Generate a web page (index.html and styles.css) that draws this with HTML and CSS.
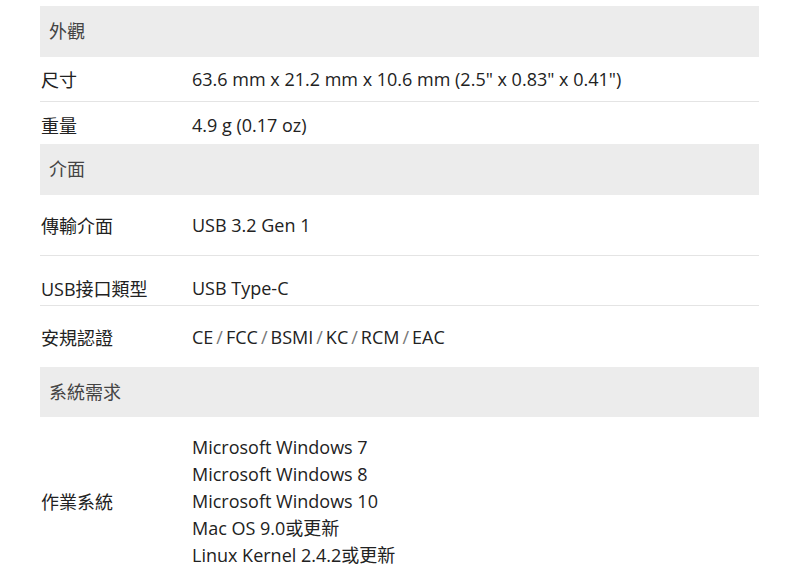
FILE: index.html
```html
<!DOCTYPE html>
<html lang="zh-Hant">
<head>
<meta charset="utf-8">
<link rel="stylesheet" href="styles.css">
</head>
<body>
<div class="spec">
  <div class="head h1">外觀</div>
  <div class="row r-size"><div class="label">尺寸</div><div class="value">63.6 mm x 21.2 mm x 10.6 mm (2.5" x 0.83" x 0.41")</div></div>
  <div class="row r-weight nob"><div class="label">重量</div><div class="value">4.9 g (0.17 oz)</div></div>
  <div class="head h2">介面</div>
  <div class="row r-tall"><div class="label">傳輸介面</div><div class="value">USB 3.2 Gen 1</div></div>
  <div class="row r-mid"><div class="label">USB接口類型</div><div class="value">USB Type-C</div></div>
  <div class="row r-tall nob"><div class="label">安規認證</div><div class="value">CE<span class="sl">/</span>FCC<span class="sl">/</span>BSMI<span class="sl">/</span>KC<span class="sl">/</span>RCM<span class="sl">/</span>EAC</div></div>
  <div class="head h3">系統需求</div>
  <div class="row r-os nob"><div class="label">作業系統</div><div class="value list">
    <div>Microsoft Windows 7</div>
    <div>Microsoft Windows 8</div>
    <div>Microsoft Windows 10</div>
    <div>Mac OS 9.0或更新</div>
    <div>Linux Kernel 2.4.2或更新</div>
  </div></div>
</div>
</body>
</html>
```
FILE: styles.css
```css
html, body {
  margin: 0;
  padding: 0;
  background: #fff;
}
body {
  font-family: "Open Sans", "Noto Sans CJK TC", sans-serif;
  font-size: 18px;
  color: #222;
}
.spec {
  margin: 6px 0 0 40px;
  width: 719px;
}
.head {
  background: #ececec;
  height: 51px;
  display: flex;
  align-items: center;
  padding: 0 0 3px 9px;
  box-sizing: border-box;
  color: #444;
}
.h3 { height: 50px; }
.row {
  display: flex;
  align-items: center;
  border-bottom: 1px solid #e4e4e4;
  box-sizing: border-box;
}
.row.nob { border-bottom: none; }
.label {
  width: 151px;
  padding-left: 1px;
  flex: none;
}
.value { flex: 1; }
.sl {
  color: #777;
  margin: 0 3px;
}
.r-size { height: 45px; }
.r-weight { height: 42px; padding-top: 4px; }
.r-tall { height: 61px; }
.r-mid { height: 50px; padding-top: 14px; }
.r-os { height: 168px; }
.list div { line-height: 27px; }
```
